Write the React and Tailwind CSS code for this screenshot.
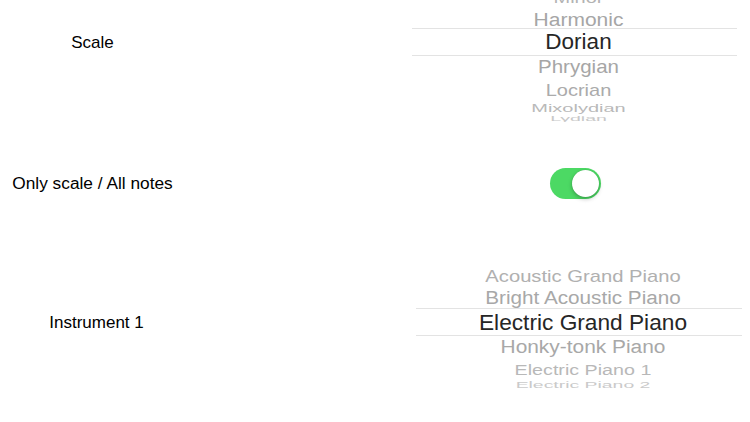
import React from "react";

const font = { fontFamily: '"Liberation Sans", Arial, Helvetica, sans-serif' };

const scaleRows = [
  { t: "Minor", h: "h-[24px]", c: "text-[20px] scale-y-[0.75] text-[#b3b3b3]" },
  { t: "Harmonic", h: "h-[18px]", c: "text-[21px] scale-y-[0.89] text-[#a6a6a6]" },
  { t: "Dorian", sel: true, c: "text-[22.5px] text-[#262626]" },
  { t: "Phrygian", h: "h-[22px]", c: "text-[20.5px] scale-y-[0.9] text-[#a6a6a6]" },
  { t: "Locrian", h: "h-[24px]", c: "text-[20px] scale-y-[0.8] text-[#ababab]" },
  { t: "Mixolydian", h: "h-[11px]", c: "text-[20px] scale-y-[0.59] text-[#b9b9b9]" },
  { t: "Lydian", h: "h-[12px]", c: "text-[19.5px] scale-y-[0.38] text-[#c8c8c8]" },
];

const instRows = [
  { t: "Acoustic Grand Piano", h: "h-[22px]", c: "text-[20.2px] scale-y-[0.78] text-[#b0b0b0]" },
  { t: "Bright Acoustic Piano", h: "h-[20px]", c: "text-[20.7px] scale-y-[0.88] text-[#a8a8a8]" },
  { t: "Electric Grand Piano", sel: true, c: "text-[22.7px] text-[#262626]" },
  { t: "Honky-tonk Piano", h: "h-[23px]", c: "text-[20.9px] scale-y-[0.88] text-[#a8a8a8]" },
  { t: "Electric Piano 1", h: "h-[21px]", c: "text-[19.7px] scale-y-[0.76] text-[#b8b8b8]" },
  { t: "Electric Piano 2", h: "h-[10px]", c: "text-[19.4px] scale-y-[0.5] text-[#cacaca]" },
];

function Row({ r }) {
  if (r.sel) {
    return (
      <div className="h-[28px] border-y border-[#e3e3e3] flex items-center justify-center pl-2 shrink-0">
        <span className={"leading-none whitespace-nowrap pt-[1px] " + r.c}>{r.t}</span>
      </div>
    );
  }
  return (
    <div className={"flex items-center justify-center pl-2 shrink-0 " + r.h}>
      <span className={"leading-none whitespace-nowrap " + r.c}>{r.t}</span>
    </div>
  );
}

export default function App() {
  return (
    <div className="w-[750px] h-[422px] bg-white overflow-hidden flex flex-col text-black" style={font}>
      {/* Scale row */}
      <div className="h-[122px] flex shrink-0">
        <div className="w-[185px] h-[86px] flex items-center justify-center text-[17px]">Scale</div>
        <div className="ml-[227px] w-[325px] h-[122px] overflow-hidden">
          <div className="-mt-[14px] flex flex-col">
            {scaleRows.map((r) => (
              <Row key={r.t} r={r} />
            ))}
          </div>
        </div>
      </div>

      {/* Toggle row */}
      <div className="h-[144px] pt-[46px] shrink-0">
        <div className="flex items-center h-[31px]">
          <div className="w-[185px] flex items-center justify-center text-[17.3px] whitespace-nowrap">
            Only scale / All notes
          </div>
          <div className="ml-[365px] w-[51px] h-[31px] rounded-full bg-[#4cd964] flex items-center justify-end p-[2px]">
            <div className="w-[27px] h-[27px] rounded-full bg-white shadow-[0_2px_4px_rgba(0,0,0,0.25),0_0_1px_rgba(0,0,0,0.2)]" />
          </div>
        </div>
      </div>

      {/* Instrument row */}
      <div className="h-[124px] flex shrink-0">
        <div className="w-[185px] pl-2 h-[113px] flex items-center justify-center text-[17px] whitespace-nowrap">
          Instrument 1
        </div>
        <div className="ml-[231px] w-[326px] h-[124px] overflow-hidden flex flex-col">
          {instRows.map((r) => (
            <Row key={r.t} r={r} />
          ))}
        </div>
      </div>
    </div>
  );
}
